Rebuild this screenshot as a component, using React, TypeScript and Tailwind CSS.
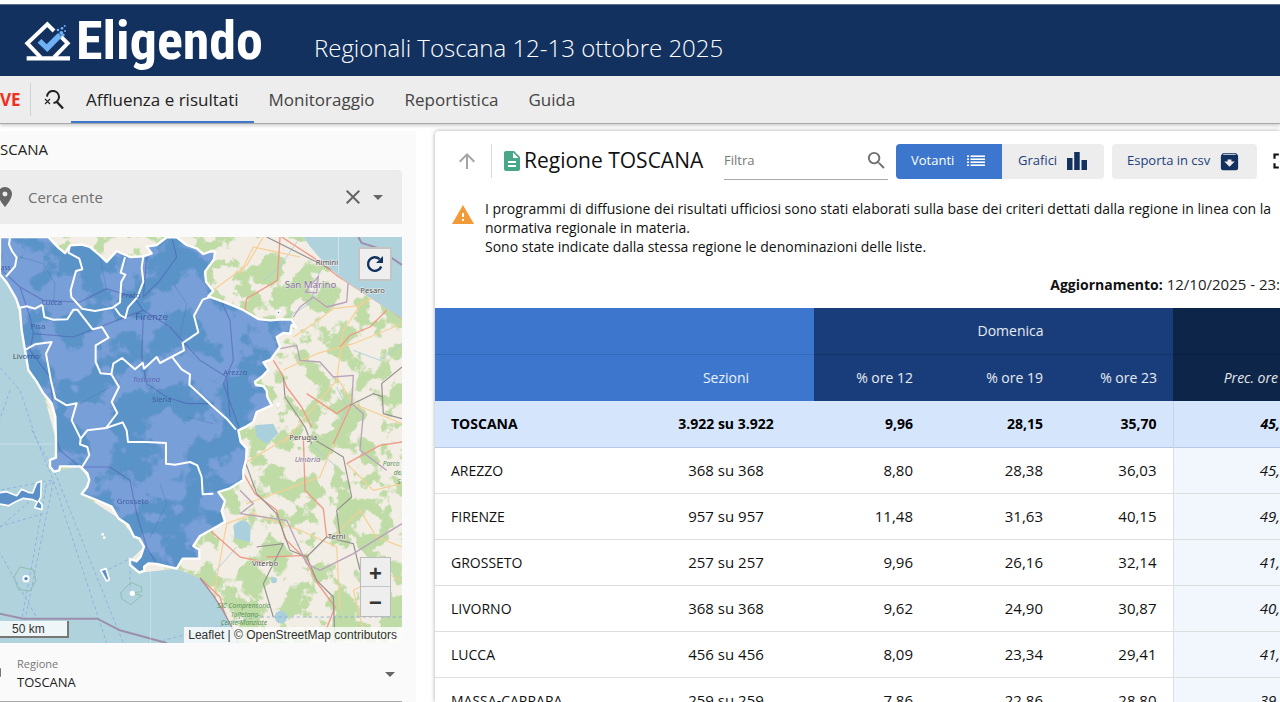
import { MdArrowUpward, MdDescription, MdWarning, MdSearch, MdArchive, MdPlace, MdClose, MdArrowDropDown, MdFullscreen } from "react-icons/md";

type Row = { name: string; sezioni: string; h12: string; h19: string; h23: string; prec: string };

const rows: Row[] = [
  { name: "TOSCANA", sezioni: "3.922 su 3.922", h12: "9,96", h19: "28,15", h23: "35,70", prec: "45," },
  { name: "AREZZO", sezioni: "368 su 368", h12: "8,80", h19: "28,38", h23: "36,03", prec: "45," },
  { name: "FIRENZE", sezioni: "957 su 957", h12: "11,48", h19: "31,63", h23: "40,15", prec: "49," },
  { name: "GROSSETO", sezioni: "257 su 257", h12: "9,96", h19: "26,16", h23: "32,14", prec: "41," },
  { name: "LIVORNO", sezioni: "368 su 368", h12: "9,62", h19: "24,90", h23: "30,87", prec: "40," },
  { name: "LUCCA", sezioni: "456 su 456", h12: "8,09", h19: "23,34", h23: "29,41", prec: "41," },
  { name: "MASSA-CARRARA", sezioni: "259 su 259", h12: "7,86", h19: "22,86", h23: "28,80", prec: "39," },
];

function LogoMark() {
  return (
    <svg viewBox="0 0 141 120" className="h-10 w-[47px]" aria-hidden="true">
      <g fill="none" stroke="#fff" strokeWidth="12">
        <path d="M90 30 L70 10 L10 67 L50 109" />
        <path d="M110 46 L131 67 L90 109" />
        <path d="M8 112 H138" strokeWidth="13" />
      </g>
      <path d="M41 65 L52 54 L68 70 L102 36 L114 48 L70 93 Z" fill="#6fb1f5" />
      <g fill="#6fb1f5">
        <circle cx="112" cy="36" r="6" /><circle cx="102" cy="27" r="4" /><circle cx="114" cy="22" r="4" />
        <circle cx="123" cy="30" r="3" /><circle cx="122" cy="15" r="3" /><circle cx="118" cy="42" r="4" />
      </g>
    </svg>
  );
}

function ClearSearchIcon() {
  return (
    <svg viewBox="0 0 22 20" className="h-5 w-[22px]" fill="none" stroke="#222" aria-hidden="true">
      <path d="M4 6.6 A6 6 0 1 1 10.5 12.9" strokeWidth="2" />
      <path d="M13.5 11.5 L20 18.5" strokeWidth="2.4" />
      <path d="M2 9 L7 14 M7 9 L2 14" strokeWidth="1.1" />
    </svg>
  );
}

function ListIcon() {
  return (
    <svg viewBox="0 0 18 12" className="h-3 w-[18px]" fill="currentColor" aria-hidden="true">
      {[0, 3, 6, 9].map((y) => (
        <g key={y}>
          <rect x="0" y={y + 0.4} width="2" height="1.6" />
          <rect x="3.5" y={y + 0.4} width="14.5" height="1.6" />
        </g>
      ))}
    </svg>
  );
}

function BarsIcon() {
  return (
    <svg viewBox="0 0 20 18" className="h-[18px] w-5" fill="currentColor" aria-hidden="true">
      <rect x="0" y="6" width="5.5" height="12" />
      <rect x="7.2" y="0" width="5.5" height="18" />
      <rect x="14.5" y="8" width="5.5" height="10" />
    </svg>
  );
}

const region =
  "M0 0 H145 L175 32 L195 48 L210 25 L245 23 L270 30 L300 55 L320 75 L350 42 L390 60 L430 58 L455 49 L440 29 L470 24 L500 1 H530 L560 24 L590 34 L610 51 L630 44 H645 L642 67 L615 104 L618 134 L640 162 L625 178 L675 196 L730 219 L775 246 L810 250 L850 247 L875 248 L888 272 L875 264 L870 290 L850 288 L830 300 L840 330 L825 350 L812 368 L790 376 L805 398 L785 420 L765 434 L768 444 L790 447 L800 461 L802 480 L815 505 L770 525 L760 555 L740 568 L715 580 L722 615 L740 634 L738 669 L730 700 L730 729 L690 754 L655 765 L675 792 L665 822 L675 854 L650 869 L600 897 L580 927 L598 938 V965 H548 L530 995 L470 981 L445 979 L432 990 L433 1001 L418 1007 L390 984 V966 L410 973 L422 959 L432 929 L418 904 L402 899 L385 864 L355 844 L335 809 L290 789 L245 771 L262 749 L268 729 L262 709 L240 688 H180 L178 700 L162 704 L150 689 V669 L168 662 V609 L166 539 L155 499 L130 469 L110 434 L85 399 L75 339 L65 279 L60 219 L48 184 L22 139 L0 112 Z";

const borders = [
  "M30 0 L27 22 L36 42 L50 62 L45 88 L18 119",
  "M210 25 L205 47 L238 65 L247 97 L228 102 L212 160 L214 180 L246 215 L285 222 L338 212 L360 196 L364 134 L376 113 L362 107 L375 60",
  "M430 58 L425 92 L430 134 L412 180 L384 212 L376 243 L360 234 L345 213",
  "M60 212 L80 208 L105 215 L127 203 L133 240 L160 248 L202 247 L220 218 L232 218 L278 277 L306 270 L326 302 L287 325 V375 L302 409 L334 412 L340 380 L366 363 L405 397 L428 377 L432 395 L470 360 L480 378 L552 340 L548 318 L595 286 L582 236 L608 188 L630 180",
  "M75 339 L105 322 L155 315 L138 350 L153 432 L166 485 L200 505 L230 499 L215 550 L242 605",
  "M334 412 L357 450 L335 495 L352 528 L318 573 L262 580 L242 605 L240 622 L262 630 L268 655 L245 692",
  "M318 573 L368 556 L380 580 L384 615 L440 615 L498 618 L498 680 L525 683 L570 675 L592 685 L605 720 L608 772 L640 770",
  "M515 358 L545 397 L570 412 L568 443 L605 477 L640 510 L680 545 L708 578",
];

const redRoads = [
  "M845 0 L945 65 L1010 115 L1080 160 L1160 212 L1206 245",
  "M840 0 L832 130 L740 185 L735 215 L770 250",
  "M820 370 L845 410 L860 450 L905 510 L935 570",
  "M720 690 L765 770 L830 820 L855 905 L915 965 L950 1035 L1005 1110 L970 1200",
  "M910 600 L915 760 L970 815 L980 900",
  "M800 960 L920 955 M630 880 L720 960 L790 975",
  "M600 1022 L660 1080 L680 1150 M1160 220 L1110 270 L1050 295 L1020 330",
  "M920 470 L1010 530 L1055 500 L1000 620",
  "M1206 615 L1140 625 L1040 680",
];
const yellowRoads = [
  "M790 0 L740 85 L640 160 M900 60 L760 30 L720 110",
  "M880 300 L940 260 L1000 215 L1080 205 L1206 130",
  "M850 400 L950 350 L1060 320 L1206 260",
  "M1010 420 L1060 500 L1206 560",
  "M880 590 L800 640 L730 680 M1000 620 L960 720 L850 760 L740 800",
  "M640 1080 L680 860 L760 830 L900 880 L1010 930 L1020 1120",
  "M1040 680 L1120 760 L1206 740 M1100 1218 L1060 1060 L1160 1010 L1206 1030",
  "M850 620 L900 560 L1010 430 L1030 280 L1090 190",
  "M1206 930 L1130 900 L1080 820 L1000 900",
];
const grayRoads = [
  "M800 0 L930 65 L1060 130 L1206 240",
  "M700 580 L745 700 L770 770 L830 830 L870 940 L920 960 L950 1030 L1000 1080 L1005 1218",
  "M930 600 L1030 660 L1055 780 L1010 820 L1020 900",
  "M920 960 L980 900 L1060 920 L1080 1000",
  "M850 420 L855 480 L915 570 L935 620",
  "M1206 390 L1145 440 L1150 530 L1206 545 M1050 505 L1120 470 L1150 480",
  "M770 930 L850 920 L790 1040 L820 1140",
];
const purpleLines = [
  "M880 240 L900 210 L940 180 L980 210 L1040 195 L1045 130 L1130 150",
  "M840 335 L890 325 L900 370 L960 375 L1000 420 L1060 415 L1055 500 L1090 530 L1080 640 L1160 700",
  "M720 760 L760 800 L720 830 L860 850 L920 980 L960 1000 L1060 950 L1206 860",
  "M916 165 L955 118 L950 168 Z",
];
const tuscanRoads = [
  "M0 95 L60 150 L130 190 L240 195 L320 155 L400 180 L430 220 L510 270 L600 370 L680 420 L690 540",
  "M60 150 L90 240 L100 290 L220 300 L390 235 L430 220",
  "M100 290 L90 340 L150 420 L168 600 L180 640 L240 690 L330 690 L390 730 L410 830 L440 930 L470 981",
  "M430 240 L425 360 L440 440 L500 480 L560 500 L640 500",
  "M440 60 L430 180 L480 130 L530 60 L515 0",
  "M640 140 L690 250 L700 370 L670 440 L720 580",
];

function TuscanyMap() {
  return (
    <svg viewBox="0 0 1206 1218" preserveAspectRatio="xMinYMin slice" className="block h-[406px] w-full" role="img" aria-label="Mappa della Toscana">
      <defs>
        <filter id="woods" x="0" y="0" width="100%" height="100%" colorInterpolationFilters="sRGB">
          <feTurbulence type="fractalNoise" baseFrequency="0.014" numOctaves="5" seed="8" />
          <feColorMatrix values="0 0 0 0 0.75  0 0 0 0 0.86  0 0 0 0 0.65  0 16 0 0 -7.7" />
        </filter>
        <filter id="hills" x="0" y="0" width="100%" height="100%" colorInterpolationFilters="sRGB">
          <feTurbulence type="fractalNoise" baseFrequency="0.009" numOctaves="5" seed="21" />
          <feColorMatrix values="0 0 0 0 0.24  0 0 0 0 0.53  0 0 0 0 0.72  0 14 0 0 -6.6" />
        </filter>
        <clipPath id="region"><path d={region} /></clipPath>
        <clipPath id="land">
          <path d="M0 0 H910 Q960 75 1040 135 L1206 245 V1218 H715 Q680 1120 600 1023 L530 995 L418 1007 L390 970 L432 929 L355 844 L245 771 L268 729 L240 688 L160 704 L168 609 L130 469 L75 339 L48 184 L0 112 Z" />
        </clipPath>
      </defs>
      <rect width="1206" height="1218" fill="#b0d2dd" />
      <g clipPath="url(#land)">
        <rect width="1206" height="1218" fill="#f2ede5" />
        <rect width="1206" height="1218" filter="url(#woods)" />
        <g fill="#a9d0dc">
          <path d="M765 565 L820 560 L835 590 L800 620 L770 600 Z" />
          <path d="M700 865 Q740 835 752 870 L750 915 L705 905 Z" />
          <circle cx="843" cy="1140" r="19" /><circle cx="822" cy="1030" r="9" />
        </g>
        <g fill="none" strokeLinejoin="round">
          <g stroke="#a8cddc" strokeWidth="2.5">
            <path d="M900 0 L840 90 L790 130 M960 100 L930 200 L860 240 M1206 320 L1140 370 L1060 340" />
            <path d="M1010 450 L1040 510 L1020 560 M930 620 L1010 690 M710 930 L640 1010" />
          </g>
          <g stroke="#f7cf94" strokeWidth="3.5">{yellowRoads.map((d) => <path key={d} d={d} />)}</g>
          <g stroke="#ef9b86" strokeWidth="4">{redRoads.map((d) => <path key={d} d={d} />)}</g>
          <g stroke="#96908f" strokeWidth="3.5">{grayRoads.map((d) => <path key={d} d={d} />)}</g>
          <g stroke="#b9a3ba" strokeWidth="4">{purpleLines.map((d) => <path key={d} d={d} />)}</g>
        </g>
      </g>
      <path d="M600 1023 Q680 1120 715 1218" fill="none" stroke="#a88f9c" strokeWidth="4" />
      <g fill="none" stroke="#86a6dc" strokeWidth="3" strokeDasharray="10 8" opacity=".75">
        <path d="M-10 380 L60 460 L110 610 L160 730 L320 1218 M30 460 L-5 560 M95 579 L170 720 L370 1218" />
        <path d="M155 730 L-5 760 M155 735 L-5 875 M160 735 L75 1150 M140 740 L65 1150 M-5 940 L115 1150" />
        <path d="M130 830 L-5 870 M310 1005 L390 965 V1060 M1206 1140 H770 L490 1210" />
      </g>
      <path d="M-5 1129 L70 1145 H292 L360 1180 L500 1218 M1075 0 L1085 18 L1130 32 L1206 84" fill="none" stroke="#9c8fae" strokeWidth="6" />
      <path d="M60 990 L100 998 L108 1030 L90 1062 L55 1058 L42 1020 Z M362 1068 L392 1036 L425 1050 V1064 L395 1068 L425 1076 L392 1103 L365 1085 Z" fill="none" stroke="#8dbfae" strokeWidth="3" />

      <g clipPath="url(#region)">
        <path d={region} fill="#799fd8" />
        <rect width="1206" height="1218" filter="url(#hills)" opacity=".5" />
      </g>
      <g clipPath="url(#region)" fill="none" stroke="#4a4fae" strokeWidth="3.5" opacity=".45">
        {tuscanRoads.map((d) => <path key={d} d={d} />)}
      </g>
      <g fill="none" stroke="#4a78b8" strokeWidth="2.5" opacity=".5" clipPath="url(#region)">
        <path d="M60 60 L130 80 L165 140 L160 200 M300 60 L320 160 M520 140 L560 200 L540 300 M240 500 L330 450 M480 740 L500 800 L450 900 M560 540 L640 560" />
      </g>
      <g fill="#5a8fc8" stroke="#fff" strokeWidth="7" strokeLinejoin="round">
        <path d={region} fill="none" />
        <path d="M-8 768 L20 764 L50 776 L65 757 L85 766 L98 768 L110 738 L124 732 L122 780 L116 792 L126 802 V818 L104 812 L112 794 L98 788 L70 784 L50 793 L25 806 L-8 800 Z" strokeWidth="5" />
        <path d="M302 1000 L318 995 L328 1028 L320 1032 Z" strokeWidth="5" />
        <path d="M828 222 L842 222 L836 234 Z M830 501 L838 499 L834 507 Z" strokeWidth="4" />
        {borders.map((d) => <path key={d} d={d} fill="none" strokeWidth="6" />)}
      </g>
      <g fill="#fff">
        <circle cx="78" cy="1025" r="11" /><circle cx="78" cy="1025" r="5" fill="#4a7fcb" />
        <circle cx="397" cy="1069" r="8" /><circle cx="308" cy="892" r="4" /><circle cx="313" cy="902" r="4" />
        <rect y="620" width="168" height="2" opacity=".45" /><rect x="451" y="995" width="2" height="223" opacity=".45" />
        <rect x="1015" width="2" height="110" opacity=".6" />
      </g>
      <g className="font-['Noto_Sans',sans-serif]" fontSize="23">
        <g fill="#38549b" opacity=".85">
          <text x="2" y="99" fontSize="20">ass</text><text x="125" y="205">Lucca</text><text x="92" y="276">Pisa</text>
          <text x="363" y="183">Prato</text><text x="406" y="248" fontSize="29">Firenze</text>
          <text x="456" y="495">Siena</text><text x="670" y="414">Arezzo</text><text x="350" y="800">Grosseto</text>
          <text x="398" y="436" fontStyle="italic" fill="#5b5fb0">Toscana</text>
        </g>
        <text x="38" y="366" fill="#4b5563">Liv<tspan fill="#38549b">orno</tspan></text>
        <g fill="#4a4a4a" stroke="#f6f3ee" strokeWidth="3" paintOrder="stroke">
          <text x="947" y="85">Rimini</text><text x="1081" y="168">Pesaro</text><text x="868" y="608">Perugia</text>
          <text x="983" y="907">Terni</text><text x="756" y="987">Viterbo</text>
        </g>
        <g fill="#84709a" stroke="#f6f3ee" strokeWidth="2" paintOrder="stroke">
          <text x="854" y="152" fontSize="29">San Marino</text>
          <text x="884" y="674" fontStyle="italic">Umbria</text>
        </g>
        <g fill="#5c9458" fontStyle="italic" fontSize="20">
          <text x="1148" y="688">Parco</text><text x="1181" y="714">de</text><text x="1192" y="740">S</text>
          <text x="652" y="1112">SIC Comprensorio</text><text x="692" y="1139">Tolfetano-</text><text x="662" y="1165">Cerite-Manziate</text>
        </g>
      </g>
    </svg>
  );
}

function Sidebar() {
  return (
    <aside className="flex w-[416px] shrink-0 flex-col bg-[#fafafa] pr-[14px]">
      <h2 className="h-[39px] text-[15px] leading-[36px] text-[#222]">SCANA</h2>
      <div className="flex h-[54px] items-center rounded-tr bg-[#ececec] pr-3 text-[#666]">
        <div className="w-[14px] shrink-0 overflow-hidden">
          <MdPlace className="-ml-[7px] size-6 max-w-none" aria-hidden="true" />
        </div>
        <input aria-label="Cerca ente" placeholder="Cerca ente" className="ml-[14px] min-w-0 flex-1 bg-transparent text-[15px] outline-none placeholder:text-[#707070]" />
        <button aria-label="Cancella" className="mr-[1px]"><MdClose className="size-6" /></button>
        <button aria-label="Apri elenco"><MdArrowDropDown className="size-6" /></button>
      </div>
      <section className="relative mt-[13px] overflow-hidden">
        <TuscanyMap />
        <button aria-label="Ricarica" className="absolute right-[10px] top-[10px] grid size-[34px] place-items-center border-2 border-[#c4c4c4] bg-[#eee]">
          <svg viewBox="0 0 18 18" className="size-[18px]" fill="none" aria-hidden="true">
            <path d="M15.2 11.5 A6.8 6.8 0 1 1 13.6 4.2" stroke="#13315f" strokeWidth="2.4" />
            <path d="M17 1 V8 H10 Z" fill="#13315f" />
          </svg>
        </button>
        <div className="absolute bottom-[26px] right-[11px] flex w-[31px] flex-col divide-y divide-[#c4c4c4] border border-[#bbb] bg-[#eee] font-['Liberation_Sans',sans-serif] text-[22px] font-bold leading-[31px] text-[#333]">
          <button aria-label="Ingrandisci" className="h-[29px]">+</button>
          <button aria-label="Riduci" className="h-[29px]">−</button>
        </div>
        <div className="absolute bottom-[5px] left-0 h-[17px] w-[69px] border-b-2 border-r-2 border-[#777] bg-white/80 pl-3 font-['Liberation_Sans',sans-serif] text-xs leading-4 text-[#333]">50 km</div>
        <div className="absolute bottom-0 right-0 bg-white/80 pl-1 pr-[5px] font-['Liberation_Sans',sans-serif] text-xs leading-4 text-[#333]">
          <a href="#leaflet">Leaflet</a> | © <a href="#osm">OpenStreetMap</a> contributors
        </div>
      </section>
      <button className="flex h-[59px] items-center justify-between border-b border-[#aaa] text-left">
        <span className="flex items-center">
          <span className="h-[9px] w-px rounded-r bg-[#777]" />
          <span className="ml-4 mt-1 flex flex-col">
            <span className="text-[11px] leading-4 text-[#777]">Regione</span>
            <span className="text-[13px] leading-5 text-[#222]">TOSCANA</span>
          </span>
        </span>
        <MdArrowDropDown className="mt-1 size-6 text-[#666]" aria-hidden="true" />
      </button>
    </aside>
  );
}

function Toolbar() {
  return (
    <div className="flex h-[60px] items-center overflow-hidden pl-5 text-[13px] text-[#1d3f7c]">
      <button aria-label="Livello superiore" className="mr-3 shrink-0 text-[#a5a5a5]"><MdArrowUpward className="size-6" /></button>
      <span className="mr-2 h-[34px] w-px shrink-0 bg-[#d8d8d8]" />
      <MdDescription className="size-6 shrink-0 text-[#48a788]" aria-hidden="true" />
      <h1 className="w-[200px] shrink-0 whitespace-nowrap text-[21px] text-[#111]">Regione TOSCANA</h1>
      <label className="flex h-[38px] w-[164px] shrink-0 items-center border-b border-[#aaa]">
        <input aria-label="Filtra" placeholder="Filtra" className="min-w-0 flex-1 bg-transparent text-[13px] outline-none placeholder:text-[#777]" />
        <MdSearch className="size-[23px] text-[#707070]" aria-hidden="true" />
      </label>
      <button className="ml-2 flex h-[35px] w-[106px] shrink-0 items-center justify-between rounded-l bg-[#3d76cd] pl-[15px] pr-[17px] text-white">Votanti<ListIcon /></button>
      <button className="flex h-[35px] w-[102px] shrink-0 items-center justify-between rounded-r bg-[#ededed] pl-4 pr-[17px]">Grafici<span className="text-[#13315f]"><BarsIcon /></span></button>
      <button className="ml-2 flex h-[35px] w-[145px] shrink-0 items-center justify-between rounded bg-[#ededed] pl-[15px] pr-4">Esporta in csv<MdArchive className="size-[23px] text-[#13315f]" aria-hidden="true" /></button>
      <button aria-label="Schermo intero" className="ml-[11px] shrink-0 text-[#111]"><MdFullscreen className="size-[26px]" /></button>
    </div>
  );
}

function ResultsTable() {
  return (
    <table className="w-full table-fixed border-collapse text-[15px] text-[#111]">
      <colgroup>
        <col className="w-[203px]" /><col className="w-[176px]" /><col className="w-[115px]" /><col className="w-[129px]" /><col className="w-[115px]" /><col />
      </colgroup>
      <thead className="text-[14px] text-white/90">
        <tr className="h-[46px]">
          <th colSpan={2} className="border-b border-[#3569ba] bg-[#3d76cd]" />
          <th colSpan={3} className="border-b border-[#16366a] bg-[#193d7b] pl-[34px] text-center font-normal">Domenica</th>
          <th className="border-b border-[#0a203f] bg-[#0c2548]" />
        </tr>
        <tr className="h-[47px] whitespace-nowrap text-right">
          <th scope="col" aria-label="Ente" className="bg-[#3d76cd]" />
          <th scope="col" className="bg-[#3d76cd] text-center font-normal">Sezioni</th>
          <th scope="col" className="bg-[#193d7b] pr-4 font-normal">% ore 12</th>
          <th scope="col" className="bg-[#193d7b] pr-[15px] font-normal">% ore 19</th>
          <th scope="col" className="bg-[#193d7b] pr-4 font-normal">% ore 23</th>
          <th scope="col" className="bg-[#0c2548] pr-[2px] font-normal italic">Prec. ore</th>
        </tr>
      </thead>
      <tbody>
        {rows.map((r, i) => (
          <tr key={r.name} className={i === 0 ? "h-[46px] border-b border-[#b5c9e5] bg-[#d5e5fc] text-right text-[14px] font-bold text-black" : "h-[46px] border-b border-[#dedede] text-right"}>
            <th scope="row" className={i === 0 ? "pl-4 text-left font-bold" : "pl-4 text-left text-[14px] font-normal"}>{r.name}</th>
            <td className="text-center">{r.sezioni}</td>
            <td className="pr-4">{r.h12}</td>
            <td className="pr-[15px]">{r.h19}</td>
            <td className="pr-4">{r.h23}</td>
            <td className={i === 0 ? "border-l border-[#c3d3ea] italic" : "border-l border-[#d9dfe8] bg-[#f2f6fd] italic"}>{r.prec}</td>
          </tr>
        ))}
      </tbody>
    </table>
  );
}

export default function App() {
  return (
    <div className="flex h-screen flex-col overflow-hidden bg-white pt-1 font-['Open_Sans','Noto_Sans',sans-serif]">
      <header className="flex h-[72px] shrink-0 items-center border-t border-[#5d7089] bg-[#13315f] pl-6 text-white">
        <LogoMark />
        <span className="ml-[5px] font-['Roboto_Condensed',sans-serif] text-[54px] font-bold leading-[72px]">Eligendo</span>
        <p className="ml-[51px] mt-[14px] whitespace-nowrap text-[24px] font-light leading-8">Regionali Toscana 12-13 ottobre 2025</p>
      </header>
      <nav className="relative flex h-12 shrink-0 items-stretch border-b border-[#a8a8a8] bg-[#ededed] text-[17px] text-[#444] shadow-[0_2px_3px_rgba(0,0,0,0.18)]">
        <div className="my-[7px] flex w-[31px] items-center border-r border-[#d0d0d0]">
          <a href="#live" className="text-[17px] font-bold text-[#f0301c]">VE</a>
        </div>
        <button aria-label="Azzera ricerca" className="mx-[10px] flex items-center pl-[2px]"><ClearSearchIcon /></button>
        <a href="#affluenza" className="-ml-[4px] flex items-center border-b-2 border-[#3d76cd] px-[15px] pt-[2px] text-[#222]">Affluenza e risultati</a>
        <a href="#monitoraggio" className="ml-[15px] flex items-center">Monitoraggio</a>
        <a href="#reportistica" className="ml-[30px] flex items-center">Reportistica</a>
        <a href="#guida" className="ml-[30px] flex items-center">Guida</a>
      </nav>
      <div className="flex min-h-0 flex-1 gap-[19px] pt-[7px]">
        <Sidebar />
        <main className="min-w-0 flex-1 overflow-hidden rounded-tl bg-white shadow-[0_0_4px_rgba(0,0,0,0.35)]">
          <Toolbar />
          <div className="flex gap-2 pl-4 pt-2">
            <MdWarning className="mt-1 size-6 shrink-0 text-[#f29a38]" aria-hidden="true" />
            <p className="whitespace-nowrap pl-[2px] text-[14px] leading-[19px] text-[#111]">
              I programmi di diffusione dei risultati ufficiosi sono stati elaborati sulla base dei criteri dettati dalla regione in linea con la<br />
              normativa regionale in materia.<br />
              Sono state indicate dalla stessa regione le denominazioni delle liste.
            </p>
          </div>
          <p className="flex h-[52px] items-center justify-end gap-1 pt-1 text-[15px] text-[#222]">
            <b className="text-[14px] text-[#111]">Aggiornamento:</b> 12/10/2025 - 23:
          </p>
          <ResultsTable />
        </main>
      </div>
    </div>
  );
}
